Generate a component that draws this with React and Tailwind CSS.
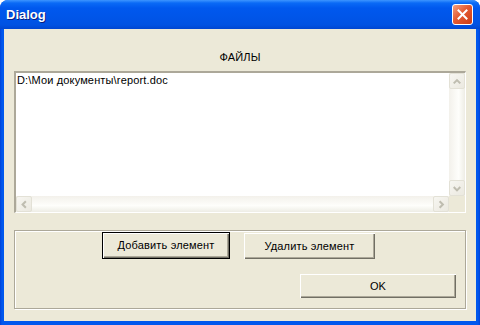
export default function App() {
  const tahoma = { fontFamily: '"Liberation Sans", Arial, sans-serif' };

  return (
    <div className="w-[480px] h-[325px] flex flex-col rounded-t-[8px] overflow-hidden bg-[linear-gradient(to_right,#0041D8_0px,#0058EE_2px,#0058EE_calc(100%-2px),#0041D8_100%)]">
      {/* title bar */}
      <div className="h-[29px] flex items-center justify-between pl-[6px] pr-[7px] bg-[linear-gradient(to_bottom,#3D95FF_0px,#0A6AF6_3px,#0058EE_8px,#0055E8_18px,#0052E2_25px,#0046D0_29px)]">
        <span
          className="text-white font-bold text-[13px] [text-shadow:1px_1px_0_#0A1E80]"
          style={tahoma}
        >
          Dialog
        </span>
        <div className="w-[21px] h-[21px] rounded-[3px] border border-white bg-[linear-gradient(135deg,#F5A080_0%,#E45A32_45%,#CC3C14_100%)] flex items-center justify-center">
          <svg width="11" height="11" viewBox="0 0 11 11">
            <path d="M1.5 1.5 L9.5 9.5 M9.5 1.5 L1.5 9.5" stroke="white" strokeWidth="2" strokeLinecap="square" />
          </svg>
        </div>
      </div>

      {/* body */}
      <div className="flex-1 mx-[4px] mb-[4px] bg-[#ECE9D8] flex flex-col px-[10px] tracking-[0.15px]" style={tahoma}>
        <div className="h-[42px] flex items-end justify-center pb-[6px] text-[11px] text-black">ФАЙЛЫ</div>

        {/* list box */}
        <div className="h-[142px] border-t-2 border-l-2 border-t-[#ACA899] border-l-[#ACA899] border-b border-r border-b-white border-r-white flex flex-col bg-white">
          <div className="flex-1 flex min-h-0">
            <div className="flex-1 px-[1px] pt-[1px] text-[11px] leading-[13px] text-black">
              D:\Мои документы\report.doc
            </div>
            <div className="w-[16px] flex flex-col bg-[linear-gradient(to_right,#F3F1EB,#FEFEFB_60%,#EEEDE5)]">
              <ScrollBtn dir="up" />
              <div className="flex-1" />
              <ScrollBtn dir="down" />
            </div>
          </div>
          <div className="h-[16px] flex">
            <div className="flex-1 flex bg-[linear-gradient(to_bottom,#F3F1EB,#FEFEFB_60%,#EEEDE5)]">
              <ScrollBtn dir="left" />
              <div className="flex-1" />
              <ScrollBtn dir="right" />
            </div>
            <div className="w-[16px] bg-[#ECE9D8]" />
          </div>
        </div>

        {/* group box */}
        <div className="mt-[17px] h-[79px] border border-[#ACA899] shadow-[inset_1px_1px_0_white,1px_1px_0_white] flex flex-col">
          <div className="flex gap-[14px] pl-[87px] pt-[1px]">
            <button className="w-[128px] h-[27px] border border-black bg-[#ECE9D8] text-[11px] text-black shadow-[inset_1px_1px_0_white,inset_-1px_-1px_0_#716F64,inset_-2px_-2px_0_#ACA899]">
              Добавить элемент
            </button>
            <button className="w-[131px] h-[26px] mt-[1px] bg-[#ECE9D8] text-[11px] text-black shadow-[inset_1px_1px_0_white,inset_-1px_-1px_0_#716F64,inset_-2px_-2px_0_#ACA899]">
              Удалить элемент
            </button>
          </div>
          <div className="flex justify-end pr-[9px] mt-[15px]">
            <button className="w-[156px] h-[24px] bg-[#ECE9D8] text-[11px] text-black shadow-[inset_1px_1px_0_white,inset_-1px_-1px_0_#716F64,inset_-2px_-2px_0_#ACA899]">
              OK
            </button>
          </div>
        </div>
      </div>
    </div>
  );
}

function ScrollBtn({ dir }) {
  const paths = {
    up: "M4 9.5 L7.5 6 L11 9.5",
    down: "M4 6 L7.5 9.5 L11 6",
    left: "M9.5 4 L6 7.5 L9.5 11",
    right: "M6 4 L9.5 7.5 L6 11",
  };
  return (
    <div className="w-[16px] h-[16px] rounded-[2px] border border-[#E3E1D6] bg-[linear-gradient(135deg,#F7F6F1,#EBE9E0)] flex items-center justify-center">
      <svg width="15" height="15" viewBox="0 0 15 15">
        <path d={paths[dir]} stroke="#BFBDB0" strokeWidth="2.2" fill="none" />
      </svg>
    </div>
  );
}
